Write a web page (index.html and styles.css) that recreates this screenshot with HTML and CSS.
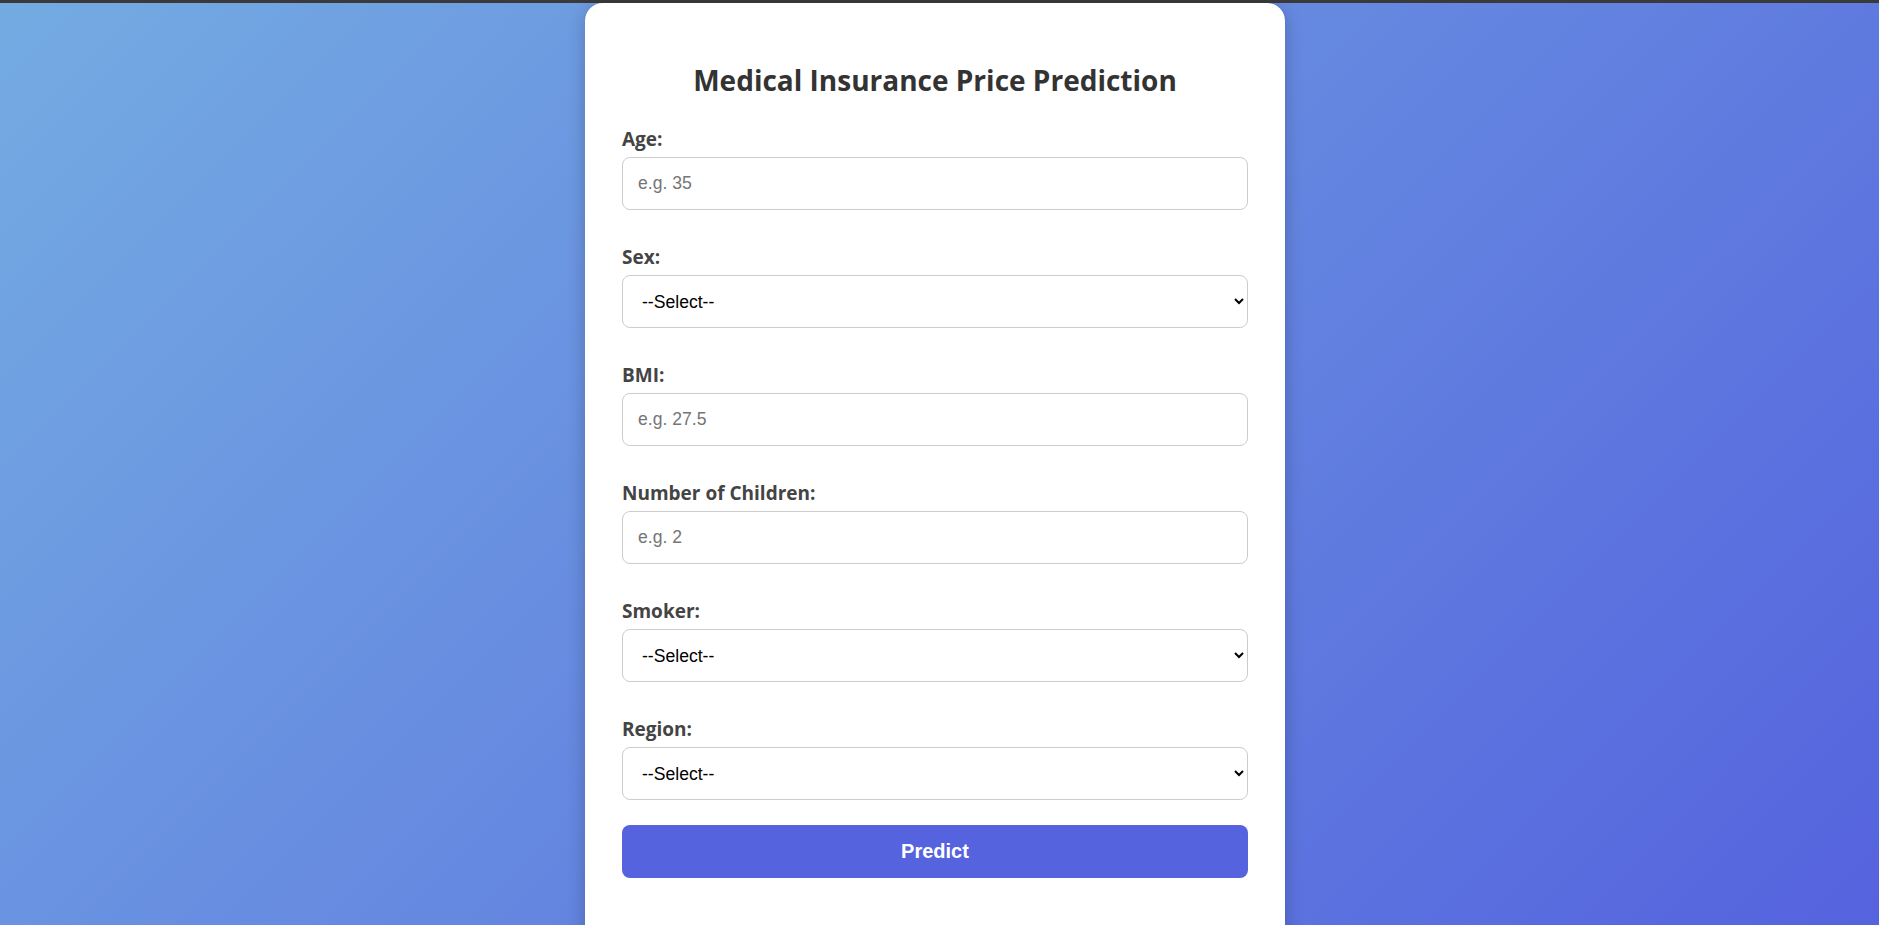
FILE: index.html
```html
<!DOCTYPE html>
<html lang="en">
<head>
<meta charset="utf-8">
<title>Medical Insurance Price Prediction</title>
<link rel="stylesheet" href="styles.css">
</head>
<body>
<div class="topbar"></div>
<main class="page">
  <div class="card">
    <h2 class="title">Medical Insurance Price Prediction</h2>
    <form class="form">
      <div class="field">
        <label class="label" for="age">Age:</label>
        <input class="control" id="age" type="number" placeholder="e.g. 35">
      </div>
      <div class="field">
        <label class="label" for="sex">Sex:</label>
        <select class="control select" id="sex">
          <option>--Select--</option>
          <option>Male</option>
          <option>Female</option>
        </select>
      </div>
      <div class="field">
        <label class="label" for="bmi">BMI:</label>
        <input class="control" id="bmi" type="number" placeholder="e.g. 27.5">
      </div>
      <div class="field">
        <label class="label" for="children">Number of Children:</label>
        <input class="control" id="children" type="number" placeholder="e.g. 2">
      </div>
      <div class="field">
        <label class="label" for="smoker">Smoker:</label>
        <select class="control select" id="smoker">
          <option>--Select--</option>
          <option>Yes</option>
          <option>No</option>
        </select>
      </div>
      <div class="field">
        <label class="label" for="region">Region:</label>
        <select class="control select" id="region">
          <option>--Select--</option>
          <option>Northeast</option>
          <option>Northwest</option>
          <option>Southeast</option>
          <option>Southwest</option>
        </select>
      </div>
      <button class="button" type="button">Predict</button>
    </form>
  </div>
</main>
</body>
</html>
```
FILE: styles.css
```css
html, body {
  margin: 0;
  padding: 0;
}

body {
  min-height: 100vh;
  background: linear-gradient(135deg, #74abe2, #5563de);
  background-attachment: fixed;
  font-family: "Open Sans", "Lato", sans-serif;
}

.topbar {
  height: 3px;
  background: #3a3a3a;
}

.page {
  display: flex;
  justify-content: center;
  padding-right: 9px;
}

.card {
  width: 700px;
  box-sizing: border-box;
  background: #ffffff;
  border-radius: 18px;
  padding: 60px 37px 120px;
  box-shadow: 0 4px 18px rgba(0, 0, 0, 0.22);
}

.title {
  margin: 0;
  text-align: center;
  font-size: 28px;
  line-height: 34px;
  font-weight: 700;
  color: #333333;
}

.form {
  display: flex;
  flex-direction: column;
  margin-top: 31px;
}

.field {
  display: flex;
  flex-direction: column;
}

.field + .field {
  margin-top: 36px;
}

.label {
  font-size: 19px;
  line-height: 22px;
  font-weight: 700;
  color: #444444;
  margin-bottom: 7px;
}

.control {
  box-sizing: border-box;
  width: 100%;
  height: 53px;
  margin: 0;
  padding: 0 15px;
  border: 1px solid #cccccc;
  border-radius: 8px;
  background: #ffffff;
  font-family: "Liberation Sans", Arial, sans-serif;
  font-size: 17.6px;
  color: #000000;
}

.control::placeholder {
  color: #757575;
}

.select {
  padding: 0 12px 0 15px;
}

.button {
  margin-top: 25px;
  height: 53px;
  border: none;
  border-radius: 8px;
  background: #5563de;
  color: #ffffff;
  font-family: "Liberation Sans", Arial, sans-serif;
  font-size: 20px;
  font-weight: 700;
  cursor: pointer;
}
```
